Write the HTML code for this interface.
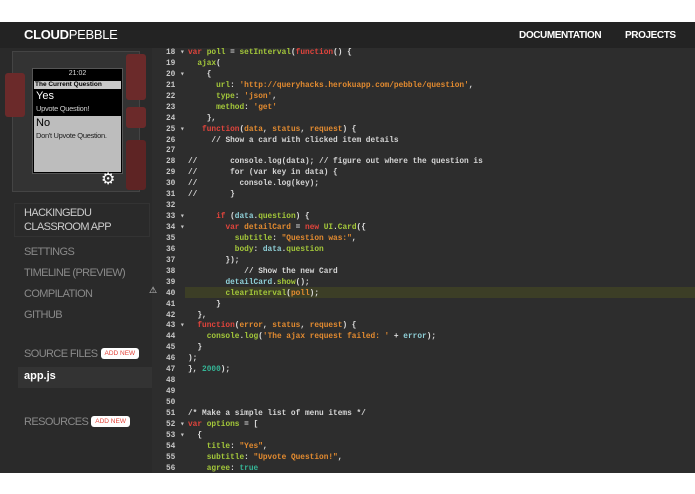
<html><head><style>
body{margin:0;width:695px;height:494px;background:#fff;position:relative;overflow:hidden;font-family:"Liberation Sans",sans-serif}
.a{position:absolute}
#hdr{left:0;top:22px;width:695px;height:26px;background:#232323}
#side{left:0;top:48px;width:152px;height:425px;background:#2a2a2a}
#code{left:152px;top:48px;width:543px;height:425px;background:#2d2d2d}
.nav{color:#8a8a8a;font-size:11px;letter-spacing:-0.6px;left:24px}
.badge{display:inline-block;background:#fff;color:#e4443a;font-size:6.5px;padding:2px 4px;border-radius:3px;vertical-align:2px;margin-left:3px;letter-spacing:0}
pre{margin:0;font-family:"Liberation Mono",monospace;font-size:7.8px;line-height:10.93px;color:#ddd;font-weight:bold}
.k{color:#e2443c}.g{color:#a4c83a}.s{color:#e38b30}.n{color:#35b596}.c{color:#8fd0d8}.m{color:#d6d6d6}
#ln{left:160px;top:48px;color:#c8c8c8}
</style></head><body>
<div id="hdr" class="a">
<div class="a" style="left:24px;top:5px;color:#fff;font-weight:bold;font-size:13px;letter-spacing:-0.3px">CLOUD<span style="font-weight:normal">PEBBLE</span></div>
<div class="a" style="left:519px;top:8px;color:#fff;font-weight:bold;font-size:10px;letter-spacing:-0.4px">DOCUMENTATION</div>
<div class="a" style="left:625px;top:8px;color:#fff;font-weight:bold;font-size:10px;letter-spacing:-0.4px">PROJECTS</div>
</div>
<div id="side" class="a">
<div class="a" style="left:12px;top:3px;width:126px;height:139px;background:#333;border:1px solid #444"></div>
<div class="a" style="left:5px;top:25px;width:20px;height:44px;background:#6b2a2a;border-radius:3px"></div>
<div class="a" style="left:126px;top:6px;width:20px;height:46px;background:#6b2a2a;border-radius:3px"></div>
<div class="a" style="left:126px;top:59px;width:20px;height:21px;background:#6b2a2a;border-radius:3px"></div>
<div class="a" style="left:126px;top:92px;width:20px;height:50px;background:#5e2424;border-radius:3px"></div>
<div class="a" style="left:32px;top:20px;width:89px;height:104px;background:#000;border:1px solid #555">
 <div class="a" style="left:0;top:1px;width:89px;text-align:center;color:#ddd;font-size:7px">21:02</div>
 <div class="a" style="left:1px;top:12px;width:86px;height:8px;background:#c8c8c8;color:#000;font-size:6.5px;font-weight:bold;line-height:8px;padding-left:1px">The Current Question</div>
 <div class="a" style="left:3px;top:21px;color:#fff;font-size:11px">Yes</div>
 <div class="a" style="left:3px;top:35px;color:#ccc;font-size:7.5px;letter-spacing:-0.3px">Upvote Question!</div>
 <div class="a" style="left:1px;top:47px;width:87px;height:56px;background:#bdbdbd"></div>
 <div class="a" style="left:3px;top:48px;color:#000;font-size:11px">No</div>
 <div class="a" style="left:3px;top:62px;color:#222;font-size:7.5px;letter-spacing:-0.3px">Don't Upvote Question.</div>
</div>
<div class="a" style="left:101px;top:121px;color:#fff;font-size:16px;font-family:'DejaVu Sans'">⚙</div>
<div class="a" style="left:14px;top:155px;width:134px;height:32px;border:1px solid #333"></div>
<div class="a" style="left:24px;top:158px;color:#ccc;font-size:11px;line-height:14px;letter-spacing:-0.6px">HACKINGEDU<br>CLASSROOM APP</div>
<div class="a nav" style="top:198px">SETTINGS</div>
<div class="a nav" style="top:219px">TIMELINE (PREVIEW)</div>
<div class="a nav" style="top:240px">COMPILATION</div>
<div class="a nav" style="top:261px">GITHUB</div>
<div class="a nav" style="top:300px">SOURCE FILES<span class="badge">ADD NEW</span></div>
<div class="a" style="left:18px;top:319px;width:134px;height:21px;background:#333"></div>
<div class="a" style="left:24px;top:322px;color:#fff;font-size:11px;font-weight:bold">app.js</div>
<div class="a nav" style="top:368px">RESOURCES<span class="badge">ADD NEW</span></div>
</div>
<div id="code" class="a">
<div class="a" style="left:33px;top:239px;width:510px;height:11px;background:#3c3e26"></div>
</div>
<div class="a" style="left:149px;top:286px;color:#ddd;font-size:9px;font-family:'DejaVu Sans'">⚠</div>
<pre id="ln" class="a" style="left:166px">18 ▾
19
20 ▾
21
22
23
24
25 ▾
26
27
28
29
30
31
32
33 ▾
34 ▾
35
36
37
38
39
40
41
42
43 ▾
44
45
46
47
48
49
50
51
52 ▾
53 ▾
54
55
56</pre>
<pre class="a" style="left:188px;top:48px"><span class="k">var</span> <span class="g">poll</span> = <span class="g">setInterval</span>(<span class="k">function</span>() {
  <span class="g">ajax</span>(
    {
      <span class="g">url</span>: <span class="s">'http://queryhacks.herokuapp.com/pebble/question'</span>,
      <span class="g">type</span>: <span class="s">'json'</span>,
      <span class="g">method</span>: <span class="s">'get'</span>
    },
   <span class="k">function</span>(<span class="s">data</span>, <span class="s">status</span>, <span class="s">request</span>) {
     <span class="m">// Show a card with clicked item details</span>

<span class="m">//       console.log(data); // figure out where the question is</span>
<span class="m">//       for (var key in data) {</span>
<span class="m">//         console.log(key);</span>
<span class="m">//       }</span>

      <span class="k">if</span> (<span class="c">data</span>.<span class="g">question</span>) {
        <span class="k">var</span> <span class="s">detailCard</span> = <span class="k">new</span> <span class="g">UI</span>.<span class="g">Card</span>({
          <span class="g">subtitle</span>: <span class="s">"Question was:"</span>,
          <span class="g">body</span>: <span class="c">data</span>.<span class="g">question</span>
        });
            <span class="m">// Show the new Card</span>
        <span class="c">detailCard</span>.<span class="g">show</span>();
        <span class="g">clearInterval</span>(<span class="s">poll</span>);
      }
  },
  <span class="k">function</span>(<span class="s">error</span>, <span class="s">status</span>, <span class="s">request</span>) {
    <span class="g">console</span>.<span class="g">log</span>(<span class="s">'The ajax request failed: '</span> + <span class="c">error</span>);
  }
);
}, <span class="n">2000</span>);



<span class="m">/* Make a simple list of menu items */</span>
<span class="k">var</span> <span class="g">options</span> = [
  {
    <span class="g">title</span>: <span class="s">"Yes"</span>,
    <span class="g">subtitle</span>: <span class="s">"Upvote Question!"</span>,
    <span class="g">agree</span>: <span class="n">true</span></pre>
</body></html>
